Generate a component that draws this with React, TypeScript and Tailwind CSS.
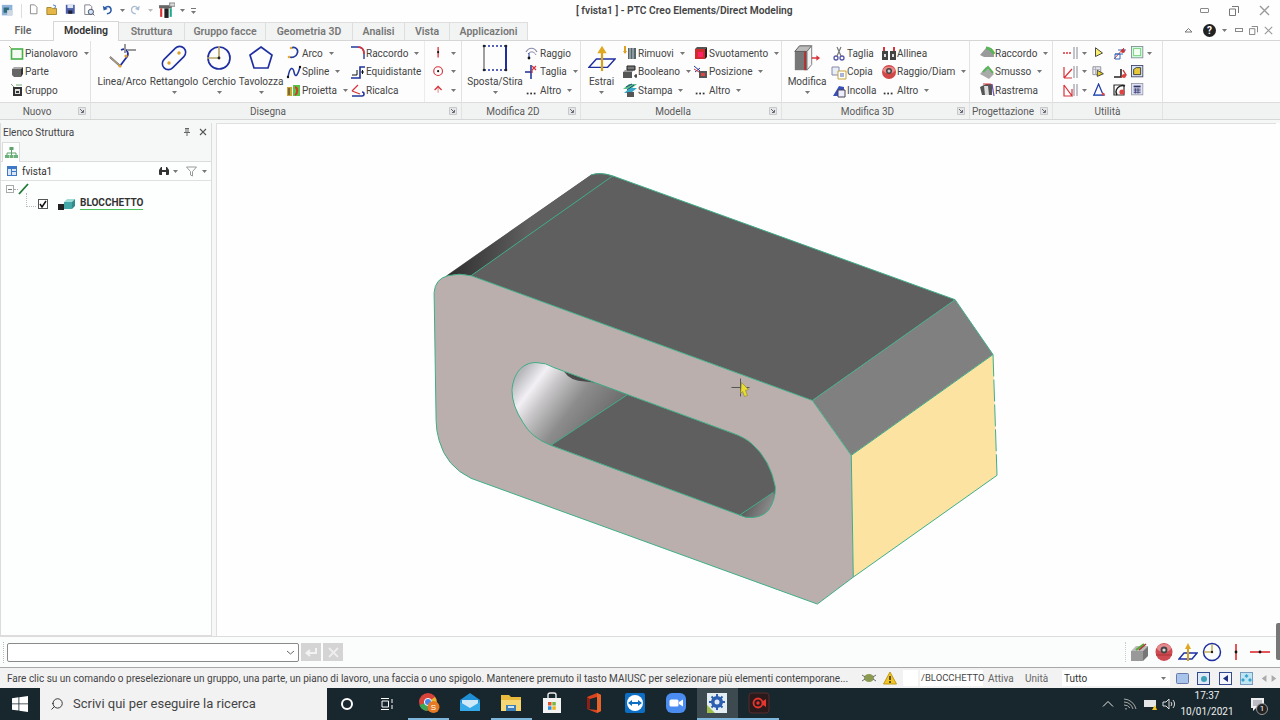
import type { ReactNode } from 'react'
import { Search } from 'lucide-react'

const I = ({ s = 16, h, box = '0 0 16 16', children }: { s?: number; h?: number; box?: string; children: ReactNode }) => (
  <svg width={s} height={h ?? s} viewBox={box} fill="none" className="shrink-0">
    {children}
  </svg>
)

const Caret = ({ color = '#777' }: { color?: string }) => (
  <svg width="5" height="3" viewBox="0 0 5 3" className="shrink-0"><path d="M0 0h5L2.5 3z" fill={color} /></svg>
)

const Launcher = () => (
  <svg width="8" height="8" viewBox="0 0 8 8" className="shrink-0">
    <path d="M.5.5h7v7h-7z" fill="#e4e6e8" stroke="#c9c9c9" />
    <path d="M2 2l3 3M5.5 3v2.5H3" stroke="#667" fill="none" />
  </svg>
)

const Dots = () => (
  <I s={14}><g fill="#333"><rect x="2" y="11" width="2" height="2" /><rect x="6" y="11" width="2" height="2" /><rect x="10" y="11" width="2" height="2" /></g></I>
)

// ribbon small icons
const ic = {
  piano: <I><rect x="2.5" y="4" width="11" height="10" stroke="#46b04a" strokeWidth="1.6" fill="#f4fbf2" /><path d="M0 1l3 3" stroke="#a89a58" /></I>,
  parte: <I><path d="M3 5h9v8H5l-2-2z" fill="#666" /><path d="M3 5l2-2h9l-2 2z" fill="#aaa" /><path d="M12 5l2-2v7l-2 3z" fill="#333" /></I>,
  gruppo: <I><path d="M4 5h9v9H4z" fill="#333" /><path d="M6 7h5v5H6z" fill="#ddd" /><path d="M2 2l3 3M7 3h6" stroke="#7a7" /><path d="M7 9h3v2H7z" fill="#333" /></I>,
  arco: <I><path d="M5 3c5-2 8 2 6 6-1 3-5 4-8 3" stroke="#233a9c" strokeWidth="1.6" /><circle cx="5" cy="3" r="1.3" fill="#e6a93a" /><circle cx="3" cy="12" r="1.3" fill="#e6a93a" /></I>,
  spline: <I><path d="M2 13C4 2 7 3 8 8s3 6 6-5" stroke="#233a9c" strokeWidth="1.5" /><circle cx="2" cy="13" r="1.2" fill="#111" /><circle cx="14" cy="3" r="1.2" fill="#111" /></I>,
  proietta: <I><rect x="1" y="5" width="5" height="9" fill="#c9a533" /><rect x="7" y="3" width="7" height="11" fill="#5ac44a" /><path d="M9 5c3 1 3 6 0 8" stroke="#d53a2a" strokeWidth="2" /><path d="M3 6v7" stroke="#333" /></I>,
  raccordo: <I><path d="M1 2h7c4 0 6 3 6 7v5" stroke="#233a9c" strokeWidth="1.4" /><path d="M8 2c4 0 6 3 6 7" stroke="#d8343c" strokeWidth="1.6" /></I>,
  equi: <I><path d="M1 14h9V3h5" stroke="#20309c" strokeWidth="1.6" /><path d="M2 11h5V6" stroke="#111" strokeWidth="1" /><path d="M11 8h3M12.5 6v4" stroke="#111" /></I>,
  ricalca: <I><path d="M2 9l6-6M2 9l8 3" stroke="#d8343c" strokeWidth="1.3" /><path d="M2 14h10a2 2 0 000-4" stroke="#233a9c" strokeWidth="1.6" /></I>,
  raggio: <I><path d="M2 7c3-5 8-5 11 0" stroke="#8a8aa8" strokeWidth="1.2" /><path d="M4 9c2-3 6-3 8 1" stroke="#8a8aa8" /><circle cx="5" cy="13" r="1.4" fill="#111" /><path d="M5 12v-4" stroke="#233a9c" /></I>,
  taglia: <I><path d="M7 1v14" stroke="#233a9c" strokeWidth="1.6" /><path d="M1 8h7" stroke="#233a9c" strokeWidth="1.6" /><path d="M8 2l4 4M12 2L8 6M8 6v3" stroke="#d8343c" strokeWidth="1.3" /></I>,
  rimuovi: <I><path d="M6 3h8v11H6z" fill="#566" /><path d="M8 3v11M11 3v11" stroke="#ccd" /><path d="M3 1v7" stroke="#e0a020" strokeWidth="2" /><path d="M1 6l2 3 2-3z" fill="#e0a020" /></I>,
  booleano: <I><path d="M1 8h9v6H1z" fill="#555" /><path d="M1 8l2-2h9l-2 2z" fill="#999" /><path d="M5 2h8v4H5z" fill="#777" stroke="#222" /><path d="M14 10v4M12 12h3" stroke="#111" /></I>,
  stampa: <I><path d="M1 7l6-5h8L9 7z" fill="#5ac48a" /><path d="M2 11l6-5h7l-6 5z" fill="#38a7c8" /><path d="M5 10h7v5H5z" fill="#555" /><path d="M4 5l6-3M5 8l7-5" stroke="#247" /></I>,
  svuota: <I><path d="M2 4h10v10H2z" fill="#d02c2c" /><path d="M2 4l2-2h10l-2 2z" fill="#555" /><path d="M12 4l2-2v10l-2 2z" fill="#222" /><path d="M5 7h5v5H5z" fill="#f26" /></I>,
  posizione: <I><path d="M6 7h8v7H6z" fill="#555" /><path d="M8 9h4v3H8z" fill="#d44" /><path d="M1 2l6 5M2 8l5-4" stroke="#233a9c" /><path d="M1 5l5 3" stroke="#d8343c" /></I>,
  cut: <I><circle cx="5" cy="13" r="2" stroke="#55a" strokeWidth="1.3" /><circle cx="11" cy="13" r="2" stroke="#55a" strokeWidth="1.3" /><path d="M6 11l4-9M10 11L6 2" stroke="#777" strokeWidth="1.2" /></I>,
  copy: <I><path d="M1 3h7v8H1z" fill="#e8eef7" stroke="#88a" /><path d="M7 7h8v8H7z" fill="#fff" stroke="#c3a33a" /><path d="M9 10h4M9 12h4" stroke="#56a" /></I>,
  paste: <I><path d="M2 14l6-10 5 1v9z" fill="#3a50b8" /><path d="M7 8h7v7H7z" fill="#eef" stroke="#445" /></I>,
  allinea: <I><path d="M1 6h6v9H1zM9 6h6v9H9z" fill="#444" /><path d="M3 9h2v3H3zM11 9h2v3h-2z" fill="#ddd" /><path d="M3 2v4M13 2v4" stroke="#d8343c" strokeWidth="2" /></I>,
  raggioD: <I><circle cx="8" cy="8" r="7" fill="#d14646" /><ellipse cx="8" cy="6" rx="6" ry="3.5" fill="#e88" /><circle cx="8" cy="7" r="3" fill="#444" /><circle cx="8" cy="7" r="1.5" fill="#ccc" /></I>,
  raccordo3: <I><path d="M1 10l6-7h5c2 2 3 5 3 9H5z" fill="#9a9a9a" /><path d="M7 3c4 0 6 2 8 6" stroke="#59b55a" strokeWidth="3" /></I>,
  smusso: <I><path d="M1 10l6-7 8 7-5 5z" fill="#aaa" /><path d="M4 8l5-5 5 6" stroke="#59b55a" strokeWidth="2" /></I>,
  rastrema: <I><path d="M1 5l6-3h6v11H3z" fill="#555" /><path d="M5 4h4l1 9H6z" fill="#ddd" /><path d="M13 2l2 12" stroke="#7055c0" strokeWidth="1.3" /><path d="M4 2h8" stroke="#d8343c" /></I>,
}

const Small = ({ icon, label, caret }: { icon: ReactNode; label: string; caret?: boolean }) => (
  <div className="flex items-center h-[18.5px]">
    <span className="w-[15px] flex justify-center">{icon}</span>
    <span className="ml-[1px] whitespace-nowrap">{label}</span>
    {caret && <span className="ml-[6px] flex"><Caret /></span>}
  </div>
)

const Col = ({ className, children }: { className: string; children: ReactNode }) => (
  <div className={`flex flex-col shrink-0 pt-[3px] ${className}`}>{children}</div>
)

const Big = ({ label, caret = true, className, children }: { label: string; caret?: boolean; className: string; children: ReactNode }) => (
  <div className={`flex flex-col items-center shrink-0 ${className}`}>
    <div className="h-[28px] flex items-center justify-center mt-[3px]">{children}</div>
    <span className="leading-[14px] whitespace-nowrap mt-[3px]">{label}</span>
    {caret && <span className="mt-[2px] flex"><Caret /></span>}
  </div>
)

const Group = ({ label, launcher, className, children }: { label: string; launcher?: boolean; className: string; children: ReactNode }) => (
  <div className={`flex flex-col shrink-0 border-r border-[#e2e2e2] ${className}`}>
    <div className="flex h-[61px]">{children}</div>
    <div className={`h-[17px] relative flex items-center justify-center bg-[#f1f2f2] border-t border-[#dcdcdc] text-[#5a5a5a] ${launcher ? 'pr-[16px]' : ''}`}>
      <span className="whitespace-nowrap">{label}</span>
      {launcher && <span className="absolute right-[4px] top-[4px] flex"><Launcher /></span>}
    </div>
  </div>
)

const tabs = [
  { t: 'File', w: 'w-[46px] mr-[7px]' },
  { t: 'Struttura', w: 'w-[66px]' },
  { t: 'Gruppo facce', w: 'w-[81px]' },
  { t: 'Geometria 3D', w: 'w-[87px]' },
  { t: 'Analisi', w: 'w-[52px]' },
  { t: 'Vista', w: 'w-[45px]' },
  { t: 'Applicazioni', w: 'w-[78px]' },
]

const Ribbon = () => (
  <div className="flex bg-[#fdfdfd] border-t border-b border-[#d6d6d6] text-[10px] text-[#444] h-[80px] mt-[-1px]">
    <Group label="Nuovo" launcher className="w-[91px]">
      <Col className="pl-[9px]">
        <Small icon={ic.piano} label="Pianolavoro" caret />
        <Small icon={ic.parte} label="Parte" />
        <Small icon={ic.gruppo} label="Gruppo" />
      </Col>
    </Group>

    <Group label="Disegna" launcher className="w-[371px]">
      <Big label="Linea/Arco" caret={false} className="w-[52px] ml-[5px]">
        <I s={30} box="0 0 30 30">
          <path d="M3 14l10 9 6-8c4-4 1-11-5-8" stroke="#1f2fa0" strokeWidth="1.8" />
          <path d="M3 14l10 9" stroke="#b7a568" strokeWidth="1.6" />
          <path d="M18 1v9M20 7h9" stroke="#999" strokeWidth="2" />
          <circle cx="13" cy="23" r="1.6" fill="#e0a030" /><circle cx="19" cy="13" r="1.6" fill="#e0a030" />
        </I>
      </Big>
      <Big label="Rettangolo" className="w-[50px] ml-[1px]">
        <I s={26} box="0 0 26 26">
          <rect x="-1" y="7" width="28" height="12" rx="6" transform="rotate(-45 13 13)" stroke="#1f2fa0" strokeWidth="1.6" />
          <circle cx="8" cy="18" r="1.7" fill="#e0a030" /><circle cx="18" cy="8" r="1.7" fill="#e0a030" />
        </I>
      </Big>
      <Big label="Cerchio" className="w-[40px]">
        <I s={26} box="0 0 26 26">
          <circle cx="13" cy="13" r="11" stroke="#1f2fa0" strokeWidth="1.7" />
          <path d="M1 13h12V1" stroke="#b7a568" strokeWidth="1.7" />
          <circle cx="13" cy="13" r="1.4" fill="#222" />
        </I>
      </Big>
      <Big label="Tavolozza" className="w-[44px]">
        <I s={26} box="0 0 26 26"><path d="M13 2l11 8-4 13H6L2 10z" stroke="#1f2fa0" strokeWidth="1.7" /></I>
      </Big>
      <Col className="w-[64px] ml-[3px]">
        <Small icon={ic.arco} label="Arco" caret />
        <Small icon={ic.spline} label="Spline" caret />
        <Small icon={ic.proietta} label="Proietta" caret />
      </Col>
      <Col className="w-[75px] border-r border-[#ececec]">
        <Small icon={ic.raccordo} label="Raccordo" caret />
        <Small icon={ic.equi} label="Equidistante" />
        <Small icon={ic.ricalca} label="Ricalca" />
      </Col>
      <Col className="pl-[7px]">
        <div className="flex items-center h-[18.5px] gap-[5px]">
          <I s={14}><path d="M7 1v12" stroke="#d8343c" strokeWidth="1.5" /><circle cx="7" cy="7" r="1.2" fill="#111" /></I><Caret />
        </div>
        <div className="flex items-center h-[18.5px] gap-[5px]">
          <I s={14}><circle cx="7" cy="7" r="5" stroke="#d8343c" strokeWidth="1.3" /><circle cx="7" cy="7" r="1.2" fill="#111" /></I><Caret />
        </div>
        <div className="flex items-center h-[18.5px] gap-[5px]">
          <I s={14}><path d="M7 3v8" stroke="#e8a0a0" strokeWidth="1.5" /><path d="M3 8l4-4 4 4" stroke="#d8343c" strokeWidth="1.5" /></I><Caret />
        </div>
      </Col>
    </Group>

    <Group label="Modifica 2D" launcher className="w-[119px]">
      <Big label="Sposta/Stira" className="w-[60px] ml-[3px]">
        <I s={28} box="0 0 28 28">
          <path d="M3 2h22" stroke="#1f2fa0" strokeDasharray="2 2" strokeWidth="1.4" />
          <path d="M3 26h22" stroke="#1f2fa0" strokeDasharray="2 2" strokeWidth="1.4" />
          <path d="M3 1v26" stroke="#888" strokeWidth="1.6" />
          <path d="M25 1v26" stroke="#1f2fa0" strokeWidth="2" />
          <g fill="#222"><circle cx="3" cy="2" r="1.3" /><circle cx="25" cy="2" r="1.3" /><circle cx="3" cy="26" r="1.3" /><circle cx="25" cy="26" r="1.3" /></g>
        </I>
      </Big>
      <Col className="ml-[-1px]">
        <Small icon={ic.raggio} label="Raggio" />
        <Small icon={ic.taglia} label="Taglia" caret />
        <Small icon={<Dots />} label="Altro" caret />
      </Col>
    </Group>

    <Group label="Modella" launcher className="w-[201px]">
      <Big label="Estrai" className="w-[41px]">
        <I s={28} box="0 0 30 30">
          <path d="M1 25l8-9h20l-8 9z" stroke="#1f2fa0" strokeWidth="1.5" />
          <path d="M15 8v21" stroke="#d4a21c" strokeWidth="2.4" />
          <path d="M10 10l5-8 5 8z" fill="#e0a820" />
        </I>
      </Big>
      <Col className="w-[71px]">
        <Small icon={ic.rimuovi} label="Rimuovi" caret />
        <Small icon={ic.booleano} label="Booleano" caret />
        <Small icon={ic.stampa} label="Stampa" caret />
      </Col>
      <Col>
        <Small icon={ic.svuota} label="Svuotamento" caret />
        <Small icon={ic.posizione} label="Posizione" caret />
        <Small icon={<Dots />} label="Altro" caret />
      </Col>
    </Group>

    <Group label="Modifica 3D" launcher className="w-[188px]">
      <Big label="Modifica" className="w-[44px] ml-[3px]">
        <I s={30} box="0 0 32 32">
          <path d="M3 9h13v20H3z" fill="#777" /><path d="M3 9l5-6h13l-5 6z" fill="#bbb" stroke="#555" />
          <path d="M16 9l5-6v20l-5 6z" fill="#f2f2f2" stroke="#777" />
          <path d="M14 9v20" stroke="#b03030" strokeWidth="2" />
          <path d="M21 16h7" stroke="#d8343c" strokeWidth="1.6" /><path d="M26 13l4 3-4 3z" fill="#d8343c" />
        </I>
      </Big>
      <Col className="w-[50px] ml-[2px]">
        <Small icon={ic.cut} label="Taglia" />
        <Small icon={ic.copy} label="Copia" />
        <Small icon={ic.paste} label="Incolla" />
      </Col>
      <Col>
        <Small icon={ic.allinea} label="Allinea" />
        <Small icon={ic.raggioD} label="Raggio/Diam" caret />
        <Small icon={<Dots />} label="Altro" caret />
      </Col>
    </Group>

    <Group label="Progettazione" launcher className="w-[83px]">
      <Col className="ml-[9px]">
        <Small icon={ic.raccordo3} label="Raccordo" caret />
        <Small icon={ic.smusso} label="Smusso" caret />
        <Small icon={ic.rastrema} label="Rastrema" />
      </Col>
    </Group>

    <Group label="Utilità" className="w-[110px]">
      <div className="grid grid-cols-[30px_20px_22px_14px_8px] grid-rows-3 items-center justify-items-center pl-[6px] pt-[3px] h-[58.5px]">
        <span className="flex items-center gap-[4px]">
          <I s={16}><path d="M1 8h9" stroke="#d8343c" strokeWidth="1.5" strokeDasharray="2 1" /><path d="M12 2v12M15 2v12" stroke="#889" /></I><Caret />
        </span>
        <I s={14}><path d="M4 2l8 6-8 4z" fill="#f8ee70" stroke="#333" /></I>
        <I s={16}><path d="M2 14L12 3" stroke="#d8343c" /><path d="M6 5h8M3 9h8" stroke="#36b" /><path d="M3 9h5v5H3z" stroke="#36b" /><circle cx="11" cy="6" r="2" fill="#c33" /></I>
        <I s={14}><rect x=".5" y=".5" width="13" height="13" fill="#cfd" stroke="#889" /><rect x="3" y="3" width="8" height="8" fill="#f4fff4" stroke="#7c7" /></I>
        <Caret />
        <span className="flex items-center gap-[4px]">
          <I s={16}><path d="M2 14V3M2 14h8M2 14l8-9" stroke="#d8343c" strokeWidth="1.2" /><path d="M12 2v12M15 2v12" stroke="#889" /></I><Caret />
        </span>
        <I s={14}><path d="M1 2h9v9H1z" fill="#eee" stroke="#889" /><path d="M1 5h9M4 2v9" stroke="#aab" /><path d="M6 6l7 4-7 3z" fill="#e8d030" stroke="#333" /></I>
        <I s={16}><path d="M2 13h7V5" stroke="#222" strokeWidth="1.6" /><path d="M9 13l5-2-3-5" stroke="#c33" strokeWidth="1.4" /><circle cx="12" cy="12" r="2" fill="#d44" /></I>
        <I s={14}><rect x=".5" y=".5" width="13" height="13" fill="#d7e6f7" stroke="#446" /><path d="M3 5l3-2h5v8H3z" fill="#e6c83a" stroke="#333" /></I>
        <span />
        <span className="flex items-center gap-[4px]">
          <I s={16}><path d="M2 3v11h8L2 3M10 14V7" stroke="#d8343c" strokeWidth="1.2" /><path d="M12 2v12M15 2v12" stroke="#889" /></I><Caret />
        </span>
        <I s={15}><path d="M7 1L2 13h10z" stroke="#223ca8" strokeWidth="1.3" /><path d="M1 13h13" stroke="#36b" /><circle cx="12" cy="12" r="1.5" fill="#d44" /></I>
        <I s={16}><path d="M2 3h10v10H2z" stroke="#333" strokeWidth="1.2" /><path d="M5 13c-3-5 2-11 8-9" stroke="#222" strokeWidth="1.5" /><circle cx="10" cy="10" r="2.6" fill="#d44" /></I>
        <I s={14}><rect x=".5" y=".5" width="13" height="13" fill="#dde4f6" stroke="#99a" /><path d="M3 3h8v2H3z" fill="#336" /><path d="M3 7h8M3 9h8M3 11h8M5 6v6M8 6v6" stroke="#447" /></I>
        <span />
      </div>
    </Group>
    <div className="flex-1 flex flex-col">
      <div className="h-[61px]" />
      <div className="h-[17px] bg-[#f1f2f2] border-t border-[#dcdcdc]" />
    </div>
  </div>
)

const Model = () => (
  <svg viewBox="216 123 1060 513" className="w-full h-full block">
    <defs>
      <linearGradient id="topside" x1="445" y1="275" x2="520" y2="285" gradientUnits="userSpaceOnUse">
        <stop offset="0" stopColor="#2e2e2e" />
        <stop offset="1" stopColor="#5f5f5f" />
      </linearGradient>
      <linearGradient id="bore" x1="520" y1="372" x2="610" y2="440" gradientUnits="userSpaceOnUse">
        <stop offset="0" stopColor="#b8b8bc" />
        <stop offset="0.16" stopColor="#f2f0f4" />
        <stop offset="0.3" stopColor="#c8c6c8" />
        <stop offset="0.55" stopColor="#8c8c8c" />
        <stop offset="1" stopColor="#5f5f5f" />
      </linearGradient>
      <linearGradient id="boreEnd" x1="750" y1="500" x2="775" y2="512" gradientUnits="userSpaceOnUse">
        <stop offset="0" stopColor="#5f5f5f" />
        <stop offset="1" stopColor="#9a9a9a" />
      </linearGradient>
    </defs>

    {/* top faces */}
    <path d="M445 275L590 174Q600 171 612 175L955 299L812 400L470 275Z" fill="#5f5f5f" />
    <path d="M443 277L590 174Q600 171 612 175L470 275Q455 271 443 277Z" fill="url(#topside)" />
    <path d="M955 299L993 354L851 455L812 400Z" fill="#808080" />
    <path d="M993 354L997 475L853 577L851 455Z" fill="#fde3a1" />

    {/* front face with slot */}
    <path
      fillRule="evenodd"
      fill="#baafac"
      d="M433 292Q434 278 447 275Q458 272 470 275L812 400L851 455L853 577L817 604L470 478Q445 466 438 440Q435 430 435 420ZM511 390C512 375 520 362 535 362Q545 362 553 367L730 432Q745 437 752 444Q770 460 775 487Q775 500 768 510Q760 519 745 517L550 445Q530 437 522 422Q511 405 511 390Z"
    />
    {/* slot interior */}
    <path
      fill="#5f5f5f"
      d="M511 390C512 375 520 362 535 362Q545 362 553 367L730 432Q745 437 752 444Q770 460 775 487Q775 500 768 510Q760 519 745 517L550 445Q530 437 522 422Q511 405 511 390Z"
    />
    <path fill="url(#bore)" d="M511 390C512 375 520 362 535 362Q545 362 553 367L627 394L550 445Q530 437 522 422Q511 405 511 390Z" />
    <path fill="#4a4a4a" d="M563 371Q570 381 584 381L594 382L580 377Z" />
    <path fill="url(#boreEnd)" d="M773 492L739 515L745 517Q760 519 768 510Q775 500 773 492Z" />

    {/* edges */}
    <g stroke="#3fae88" strokeWidth="1" fill="none">
      <path d="M433 292Q434 278 447 275Q458 272 470 275L812 400L851 455L853 577L817 604L470 478Q445 466 438 440Q435 430 435 420Z" />
      <path d="M511 390C512 375 520 362 535 362Q545 362 553 367L730 432Q745 437 752 444Q770 460 775 487Q775 500 768 510Q760 519 745 517L550 445Q530 437 522 422Q511 405 511 390Z" />
      <path d="M470 275L612 175L955 299L812 400M955 299L993 354L851 455M853 577L997 475" />
      <path d="M627 394L550 445M773 492L739 515" />
      <path d="M993 354L997 475" strokeDasharray="22 3" />
      <path d="M590 174Q600 171 612 175" />
    </g>

    {/* mouse cursor */}
    <path d="M740 378v18M731 387h18" stroke="#555" strokeWidth="1" />
    <path d="M741 382l7 7-3 1 2 5-3 1-2-5-2 2z" fill="#e8dc34" stroke="#8a8420" strokeWidth=".6" />
  </svg>
)

const StatusSquare = ({ children }: { children: ReactNode }) => <span className="flex w-[16px] justify-center">{children}</span>

const Win = () => (
  <svg width="16" height="16" viewBox="0 0 16 16"><path d="M0 2.2l6.5-.9v6.2H0zM7.3 1.2L16 0v7.5H7.3zM0 8.3h6.5v6.3L0 13.8zM7.3 8.3H16V16l-8.7-1.2z" fill="#fff" /></svg>
)

const taskIcons: { key: string; on?: boolean; active?: boolean; node: ReactNode }[] = [
  { key: 'chrome', on: true, node: (
    <I s={22} box="0 0 22 22">
      <circle cx="10" cy="10" r="9" fill="#d9443a" /><path d="M10 10L1.5 13a9 9 0 008 6z" fill="#3ba655" /><path d="M10 10l1 9a9 9 0 006-14z" fill="#e9b92e" />
      <circle cx="10" cy="10" r="3.6" fill="#4a86e8" stroke="#fff" />
      <circle cx="15.5" cy="15" r="6" fill="#e67a24" /><text x="15.5" y="18" textAnchor="middle" fontSize="8" fill="#fff" fontFamily="Liberation Sans">S</text>
    </I>) },
  { key: 'mail', node: (
    <I s={22} box="0 0 22 22"><path d="M1 8l10-7 10 7v11H1z" fill="#1f8fd6" /><path d="M3 8h16v5l-8 4-8-4z" fill="#cfe9f8" /><path d="M1 10l10 6 10-6v9H1z" fill="#36a9e8" /></I>) },
  { key: 'folder', on: true, node: (
    <I s={22} box="0 0 22 22"><path d="M1 3h8l2 2h10v14H1z" fill="#e8b93c" /><path d="M1 8h20v11H1z" fill="#f7d774" /><path d="M6 13h10v6H6z" fill="#3d7fb8" /><path d="M8 14h6v2H8z" fill="#cfe4f5" /></I>) },
  { key: 'store', node: (
    <I s={22} box="0 0 22 22"><path d="M2 6h18v15H2z" fill="#f3f3f3" /><path d="M7 6V3a2 2 0 012-2h4a2 2 0 012 2v3" stroke="#eee" strokeWidth="1.4" />
      <rect x="7" y="10" width="3.5" height="3.5" fill="#e2532f" /><rect x="11.3" y="10" width="3.5" height="3.5" fill="#79b83d" /><rect x="7" y="14.3" width="3.5" height="3.5" fill="#2f8fd8" /><rect x="11.3" y="14.3" width="3.5" height="3.5" fill="#f2b521" /></I>) },
  { key: 'office', node: (
    <I s={22} box="0 0 22 22"><path d="M4 5l10-4 4 2v16l-4 2L4 17l10 1V5L7 7v9l-3 1z" fill="#d9431f" /><path d="M14 1l4 2v16l-4 2z" fill="#e8622a" /><path d="M4 5l3 2v9l-3 1z" fill="#8f1f14" /></I>) },
  { key: 'teamviewer', node: (
    <I s={22} box="0 0 22 22"><rect x="1" y="1" width="20" height="20" rx="2" fill="#0d6fc4" /><circle cx="11" cy="11" r="8" fill="#fff" /><path d="M4 11l4-3v2h6V8l4 3-4 3v-2H8v2z" fill="#0d6fc4" /></I>) },
  { key: 'zoom', node: (
    <I s={22} box="0 0 22 22"><rect x="1" y="1" width="20" height="20" rx="6" fill="#4a8cf0" /><rect x="4.5" y="7.5" width="9" height="7" rx="1.5" fill="#fff" /><path d="M14 10l4-2.5v7L14 12z" fill="#fff" /></I>) },
  { key: 'creo', on: true, active: true, node: (
    <I s={22} box="0 0 22 22"><rect x="1" y="1" width="20" height="20" fill="#e4eef2" /><path d="M1 13l8 8H1z" fill="#9fc04a" /><circle cx="11" cy="10" r="6" fill="#2c5fb0" /><circle cx="11" cy="10" r="2.5" fill="#dfe8f5" /><path d="M11 2v3M11 15v3M3 10h3M16 10h3M5.5 4.5l2 2M14.5 13.5l2 2M16.5 4.5l-2 2M5.5 15.5l2-2" stroke="#2c5fb0" strokeWidth="2" /></I>) },
  { key: 'rec', on: true, node: (
    <I s={22} box="0 0 22 22"><rect x="1" y="1" width="20" height="20" rx="3" fill="#2b1a1c" stroke="#5a2a2a" /><circle cx="10" cy="11" r="4.5" stroke="#e8352e" strokeWidth="1.8" /><circle cx="10" cy="11" r="1.7" fill="#e8352e" /><path d="M15 9l3-2v8l-3-2z" fill="#e8352e" /></I>) },
]

export default function App() {
  return (
    <div className="w-[1280px] h-[720px] overflow-hidden flex flex-col bg-[#f6f7f7] font-['Roboto',sans-serif] text-[#444]">
      {/* title bar */}
      <div className="h-[21px] flex items-center bg-[#fefefe] shrink-0">
        <div className="w-[576px] flex items-center pl-[1px] gap-[5px]">
          <I s={14}><rect x="1" y="1" width="12" height="12" fill="#8fb2d8" /><path d="M3 4h6v6H3z" fill="#2d6a7a" /><path d="M7 7h6v6H7z" fill="#cfd7e0" /></I>
          <span className="w-px h-[14px] bg-[#ddd] mx-[1px]" />
          <I s={13}><path d="M3 1h5l3 3v8H3z" fill="#fff" stroke="#777" /></I>
          <I s={14}><path d="M1 4h5l1 1h5v7H1z" fill="#e5b749" stroke="#a27f25" /><path d="M8 1l3 1-1 3" stroke="#3c6fb5" /></I>
          <I s={13}><rect x="1" y="1" width="11" height="11" fill="#4b5fa8" /><rect x="3" y="1" width="7" height="4" fill="#dfe5f5" /><rect x="4" y="8" width="5" height="4" fill="#223" /></I>
          <I s={14}><path d="M2 1h6l2 2v9H2z" fill="#fff" stroke="#778" /><circle cx="9" cy="9" r="3" fill="#cfe3f7" stroke="#445" /><path d="M11 11l2 2" stroke="#445" /></I>
          <I s={13}><path d="M3 6c2-4 7-4 8 0s-2 6-5 6" stroke="#2a5aa8" strokeWidth="2" /><path d="M1 2l1 6 5-2z" fill="#2a5aa8" /></I>
          <Caret />
          <I s={13}><path d="M10 6C8 2 3 2 2 6s2 6 5 6" stroke="#aabcd0" strokeWidth="1.6" /><path d="M12 2l-1 6-5-2z" fill="#aabcd0" /></I>
          <Caret color="#bbb" />
          <I s={17}><path d="M1 3h12v3H1z" fill="#666" /><path d="M6 6h4v9H6z" fill="#222" /><path d="M3 6v8" stroke="#d33" strokeWidth="2" /><path d="M12 6v8" stroke="#2a8" strokeWidth="2" /><path d="M11 1h5v3h-5z" fill="#ddd" stroke="#888" /></I>
          <Caret />
          <span className="ml-[1px] flex flex-col gap-[2px]"><span className="w-[5px] h-px bg-[#777]" /><Caret /></span>
        </div>
        <span className="text-[10.25px] font-semibold text-[#444] whitespace-nowrap w-[218px]">[ fvista1 ] - PTC Creo Elements/Direct Modeling</span>
        <div className="ml-auto flex items-center gap-[20px] pr-[10px]">
          <span className="w-[9px] h-[5px] border border-[#888] rounded-[1px]" />
          <I s={10} box="0 0 10 10"><path d="M3 .5h6.5V7M.5 3h6v6.5h-6z" stroke="#777" /></I>
          <I s={11} box="0 0 11 11"><path d="M1 1l9 9M10 1l-9 9" stroke="#999" strokeWidth="1.4" /></I>
        </div>
      </div>

      {/* tabs */}
      <div className="h-[20px] flex items-end text-[10.5px] shrink-0 bg-[#fefefe] pr-[7px]">
        {tabs.slice(0, 1).map((t) => (
          <div key={t.t} className={`h-[19px] pb-[1px] flex items-center justify-center font-semibold text-[#666] ${t.w}`}>{t.t}</div>
        ))}
        <div className="w-[66px] h-[20px] pb-[1px] z-10 flex items-center justify-center font-semibold text-[#333] bg-[#fdfdfd] border border-b-0 border-[#d6d6d6]">Modeling</div>
        {tabs.slice(1).map((t) => (
          <div key={t.t} className={`h-[19px] pb-[1px] flex items-center justify-center font-semibold text-[#777] bg-[#f2f3f3] border-r border-t border-[#dedede] ${t.w}`}>{t.t}</div>
        ))}
        <div className="ml-auto self-center flex items-center gap-[6px] mb-[2px]">
          <I s={9} box="0 0 9 9"><path d="M1 6l3.5-3.5L8 6z" stroke="#777" /></I>
          <span className="w-[13px] h-[13px] rounded-full bg-[#222] text-white text-[10px] font-bold leading-[13px] text-center ml-[4px]">?</span>
          <Caret />
          <span className="w-[8px] h-[4px] border border-[#888] ml-[2px]" />
          <I s={9} box="0 0 10 10"><path d="M3 .5h6.5V7M.5 3h6v6.5h-6z" stroke="#777" /></I>
          <I s={9} box="0 0 11 11"><path d="M1 1l9 9M10 1l-9 9" stroke="#999" strokeWidth="1.4" /></I>
        </div>
      </div>

      <Ribbon />

      {/* main area */}
      <div className="flex-1 min-h-0 flex pt-[3px]">
        <div className="w-[212px] shrink-0 flex flex-col bg-[#fdfefe] border border-[#dcdcdc] text-[10px]">
          <div className="h-[18px] flex items-center pl-[2px] pr-[4px] bg-[#f6f7f7] mt-[-1px]">
            <span className="text-[#444]">Elenco Struttura</span>
            <span className="ml-auto flex items-center gap-[8px]">
              <I s={8} box="0 0 8 8"><path d="M2 .5h4M3 .5v4M5 .5v4M1 4.5h6M4 4.5V8" stroke="#666" /></I>
              <I s={8} box="0 0 8 8"><path d="M1 1l6 6M7 1L1 7" stroke="#555" strokeWidth="1.1" /></I>
            </span>
          </div>
          <div className="h-[21px] bg-[#f6f7f7] border-b border-[#dcdcdc] flex items-end pl-[1px]">
            <div className="w-[18px] h-[20px] bg-[#fdfefe] border border-b-0 border-[#dcdcdc] flex items-center justify-center mb-[-1px]">
              <I s={13} box="0 0 13 13">
                <rect x="4.5" y="1" width="4" height="3" fill="#5da26a" /><path d="M6.5 4v3M2 9V7h9v2M6.5 7v2" stroke="#5da26a" />
                <rect x="0" y="9" width="4" height="3" fill="#6cb07a" /><rect x="4.5" y="9" width="4" height="3" fill="#6cb07a" /><rect x="9" y="9" width="4" height="3" fill="#6cb07a" />
              </I>
            </div>
          </div>
          <div className="h-[19px] flex items-center pl-[6px] pr-[4px] border-b border-[#e0e0e0]">
            <I s={10} box="0 0 10 10"><rect width="10" height="10" fill="#3f78c4" /><path d="M1 3h3v6H1zM5 3h4v2H5zM5 6h4v3H5z" fill="#d8e6f6" /></I>
            <span className="ml-[5px] text-[#333]">fvista1</span>
            <span className="ml-auto flex items-center gap-[3px]">
              <I s={12} box="0 0 12 12"><path d="M1 5l2-3h1v3h4V2h1l2 3v4a1 1 0 01-1 1H8V7H4v3H2a1 1 0 01-1-1z" fill="#333" /></I>
              <Caret />
              <span className="ml-[5px] flex"><I s={11} box="0 0 11 11"><path d="M.5 1h10L6.5 5.5V10l-2-1V5.5z" stroke="#999" /></I></span>
              <span className="ml-[2px] flex"><Caret /></span>
            </span>
          </div>
          <div className="pt-[1px] pl-[5px]">
            <div className="flex items-center h-[14px]">
              <span className="w-[8px] h-[8px] border border-[#aaa] flex items-center justify-center"><span className="w-[4px] h-px bg-[#777]" /></span>
              <span className="w-[4px] border-t border-dotted border-[#aaa]" />
              <I s={12} box="0 0 12 12"><path d="M1 11L10 1" stroke="#1f7a34" strokeWidth="1.8" /></I>
            </div>
            <div className="flex items-center h-[15px] ml-[20px]">
              <span className="w-[10px] h-[14px] mt-[-8px] border-l border-b border-dotted border-[#bbb]" />
              <span className="ml-[2px] w-[10px] h-[10px] border border-[#555] bg-white flex items-center justify-center">
                <I s={8} box="0 0 8 8"><path d="M1 4l2 3 4-6" stroke="#111" strokeWidth="1.5" /></I>
              </span>
              <span className="ml-[10px] flex items-end">
                <span className="w-[6px] h-[6px] bg-[#222]" />
                <I s={12} box="0 0 12 12"><path d="M0 4h8v7H0z" fill="#45a8a8" /><path d="M0 4l3-3h8L8 4z" fill="#9fdcd8" /><path d="M8 4l3-3v7l-3 3z" fill="#338a8a" /></I>
              </span>
              <span className="ml-[4px] font-bold text-[#333] border-b border-[#4cc35a] leading-[12px]">BLOCCHETTO</span>
            </div>
          </div>
        </div>
        <div className="w-[4px] shrink-0" />
        <div className="w-[1060px] shrink-0 bg-[#fdfefd] border-t border-l border-[#e0e0e0] relative">
          <Model />
        </div>
        <div className="flex-1 bg-[#fefefe]" />
      </div>

      {/* command row */}
      <div className="h-[31px] shrink-0 flex items-center bg-[#fbfcfc] border-t border-[#dcdcdc] relative">
        <span className="w-[1px] h-[21px] ml-[3px] border-l border-dotted border-[#bbb]" />
        <div className="ml-[3px] w-[292px] h-[19px] bg-white border border-[#8a8a8a] rounded-[2px] flex items-center justify-end pr-[3px]">
          <I s={9} box="0 0 9 9"><path d="M1 3l3.5 3L8 3" stroke="#666" /></I>
        </div>
        <span className="ml-[2px] w-[20px] h-[18px] bg-[#d4d4d4] flex items-center justify-center">
          <I s={14} box="0 0 14 14"><path d="M12 3v5H3M6 5L2.5 8 6 11" stroke="#f3f3f3" strokeWidth="2" /></I>
        </span>
        <span className="ml-[2px] w-[20px] h-[18px] bg-[#d4d4d4] flex items-center justify-center">
          <I s={11} box="0 0 11 11"><path d="M1 1l9 9M10 1l-9 9" stroke="#eee" strokeWidth="1.8" /></I>
        </span>
        <div className="ml-auto flex items-center gap-[4px] pr-[10px] border-l border-dotted border-[#ccc] pl-[4px]">
          <I s={20} box="0 0 20 20"><path d="M1 9h12v10H1z" fill="#999" /><path d="M1 9l5-5h12l-5 5z" fill="#bbb" /><path d="M13 9l5-5v10l-5 5z" fill="#777" /><path d="M6 8l8-6" stroke="#5a3" strokeWidth="2" /><path d="M9 8l7-6" stroke="#a33" strokeWidth="1.5" /></I>
          <I s={20} box="0 0 20 20"><ellipse cx="10" cy="10" rx="8.5" ry="9" fill="#cd4a52" /><ellipse cx="10" cy="6" rx="7" ry="4" fill="#e58a8f" /><circle cx="10" cy="8" r="3.4" fill="#444" /><circle cx="10" cy="8" r="1.6" fill="#ddd" /><path d="M2 13h16" stroke="#a33" /></I>
          <I s={20} box="0 0 20 20"><path d="M1 17l5-6h13l-5 6z" stroke="#1f2fa0" strokeWidth="1.4" /><path d="M10 6v13" stroke="#d4a21c" strokeWidth="2" /><path d="M7 7l3-6 3 6z" fill="#e0a820" /></I>
          <I s={20} box="0 0 20 20"><circle cx="10" cy="10" r="8.5" stroke="#1f2fa0" strokeWidth="1.5" /><path d="M2 10h8V2" stroke="#c8ae5c" strokeWidth="1.5" /><circle cx="10" cy="10" r="1.2" fill="#222" /></I>
          <I s={20} box="0 0 20 20"><path d="M10 2v16" stroke="#e02a30" strokeWidth="1.6" /><circle cx="10" cy="10" r="1.4" fill="#111" /></I>
          <I s={20} box="0 0 20 20"><path d="M0 10h20" stroke="#e02a30" strokeWidth="1.6" /><circle cx="10" cy="10" r="1.4" fill="#111" /></I>
        </div>
        <span className="absolute right-0 top-[-14px] w-[4px] h-[37px] bg-[#777] rounded-l-[2px]" />
      </div>

      {/* status bar */}
      <div className="h-[21px] shrink-0 flex items-center bg-[#f2f2f2] border-t border-[#a8a8a8] text-[10px] text-[#444]">
        <span className="pl-[7px] w-[860px] whitespace-nowrap">Fare clic su un comando o preselezionare un gruppo, una parte, un piano di lavoro, una faccia o uno spigolo. Mantenere premuto il tasto MAIUSC per selezionare più elementi contemporane...</span>
        <span className="w-[15px] flex justify-center ml-[1px]">
          <I s={14} box="0 0 14 14"><ellipse cx="7" cy="7" rx="5" ry="4" fill="#8a9a50" /><path d="M0 4l3 2M0 10l3-2M14 4l-3 2M14 10l-3-2" stroke="#667" /></I>
        </span>
        <span className="w-[15px] flex justify-center ml-[6px]">
          <I s={14} box="0 0 14 14"><path d="M7 1l6.5 12H.5z" fill="#f2c522" stroke="#c09818" /><path d="M7 5v4M7 10v2" stroke="#222" strokeWidth="1.4" /></I>
        </span>
        <span className="w-[15px] h-[16px] bg-white ml-[6px]" />
        <span className="w-[63px] h-[16px] bg-white ml-[2px] pl-[1px] whitespace-nowrap leading-[16px] text-[9.5px]">/BLOCCHETTO</span>
        <span className="ml-[5px] w-[37px] text-[#666]">Attiva</span>
        <span className="w-[37px] text-[#666]">Unità</span>
        <span className="w-[108px] h-[16px] bg-white flex items-center justify-between pl-[2px] pr-[4px] text-[#333]">Tutto<Caret /></span>
        <span className="ml-[4px] flex items-center gap-[5.5px]">
          <StatusSquare><I s={13} box="0 0 13 13"><rect x=".5" y="1.5" width="12" height="10" rx="1" fill="#a8c4ec" stroke="#6a7aa8" /></I></StatusSquare>
          <StatusSquare><I s={13} box="0 0 13 13"><rect x=".5" y=".5" width="12" height="12" fill="#dfe8f5" stroke="#334a90" /><circle cx="7" cy="7" r="3" fill="#3ea0b8" /></I></StatusSquare>
          <StatusSquare><I s={13} box="0 0 13 13"><rect x=".5" y=".5" width="12" height="12" fill="#f4f6fb" stroke="#334a90" /><path d="M9 3v7L4 6.5z" fill="#1f2f80" /></I></StatusSquare>
          <StatusSquare><I s={13} box="0 0 13 13"><rect x=".5" y=".5" width="12" height="12" fill="#bfe4f2" stroke="#7a9ac0" /><path d="M6.5 2l2 2-2 2-2-2zM3 6l2 2-2 2-2-2zM10 6l2 2-2 2-2-2z" fill="#3aa4cc" /></I></StatusSquare>
        </span>
        <span className="ml-[6px] flex items-center gap-[2px]">
          <I s={7} box="0 0 7 9"><path d="M6 0v9L0 4.5z" fill="#aaa" /></I>
          <I s={7} box="0 0 7 9"><path d="M1 0v9l6-4.5z" fill="#aaa" /></I>
        </span>
      </div>

      {/* taskbar */}
      <div className="h-[32px] shrink-0 flex items-center bg-[#18272d] text-white">
        <div className="w-[40px] flex justify-center"><Win /></div>
        <div className="w-[287px] h-full bg-[#f2f2f2] flex items-center pl-[10px] text-[#444] text-[13px]">
          <Search size={14} strokeWidth={1.5} className="-scale-x-100 text-[#222]" />
          <span className="ml-[9px] whitespace-nowrap">Scrivi qui per eseguire la ricerca</span>
        </div>
        <div className="w-[39px] flex justify-center">
          <span className="w-[12px] h-[12px] rounded-full border-2 border-white" />
        </div>
        <div className="w-[42px] flex justify-center">
          <I s={14} box="0 0 14 14"><path d="M1 1.5h8M1 12.5h8M2 4h6.5v6H2z" stroke="#fff" /><path d="M12 2v4M12 8v4" stroke="#fff" /></I>
        </div>
        <div className="flex h-full">
          {taskIcons.map((t) => (
            <div key={t.key} className={`w-[41.25px] h-full flex items-center justify-center border-b-2 ${t.active ? 'bg-[#3d4a50]' : ''} ${t.on ? 'border-[#7fb6dc]' : 'border-transparent'}`}>
              {t.node}
            </div>
          ))}
        </div>
        <div className="ml-auto flex items-center">
          <I s={12} box="0 0 12 12"><path d="M1 8.5l5-5 5 5" stroke="#e8e8e8" strokeWidth="1" /></I>
          <span className="ml-[9px] flex"><I s={14} box="0 0 14 14"><path d="M2 12a2 2 0 012 0M1 8a7 7 0 016 3M1 5a10 10 0 019 7M1 2a13 13 0 0112 10" stroke="#aaa" /></I></span>
          <span className="ml-[6px] flex"><I s={14} box="0 0 14 14"><rect x="1" y="3" width="12" height="7" fill="#e6e6e6" /><path d="M9 13l3-5 2 5z" fill="#f2c522" /></I></span>
          <span className="ml-[5px] flex"><I s={14} box="0 0 14 14"><path d="M1 5h3l3-3v10L4 9H1zM9 5a3 3 0 010 4M11 3a6 6 0 010 8" stroke="#ddd" /></I></span>
          <div className="w-[56px] ml-[3px] flex flex-col items-center text-[10px] leading-[16px] text-[#eee]">
            <span>17:37</span>
            <span className="whitespace-nowrap">10/01/2021</span>
          </div>
          <div className="w-[27px] ml-[9px] flex justify-center relative">
            <I s={16} box="0 0 16 16"><path d="M1 2h13v10H6l-3 3v-3H1z" fill="#eee" /><path d="M3 5h9M3 7h9M3 9h9" stroke="#889" /></I>
            <span className="absolute left-[12px] top-[7px] w-[12px] h-[12px] rounded-full bg-[#222] border border-[#999] text-[8px] leading-[10px] text-center">1</span>
          </div>
          <span className="w-[9px]" />
        </div>
      </div>
    </div>
  )
}
